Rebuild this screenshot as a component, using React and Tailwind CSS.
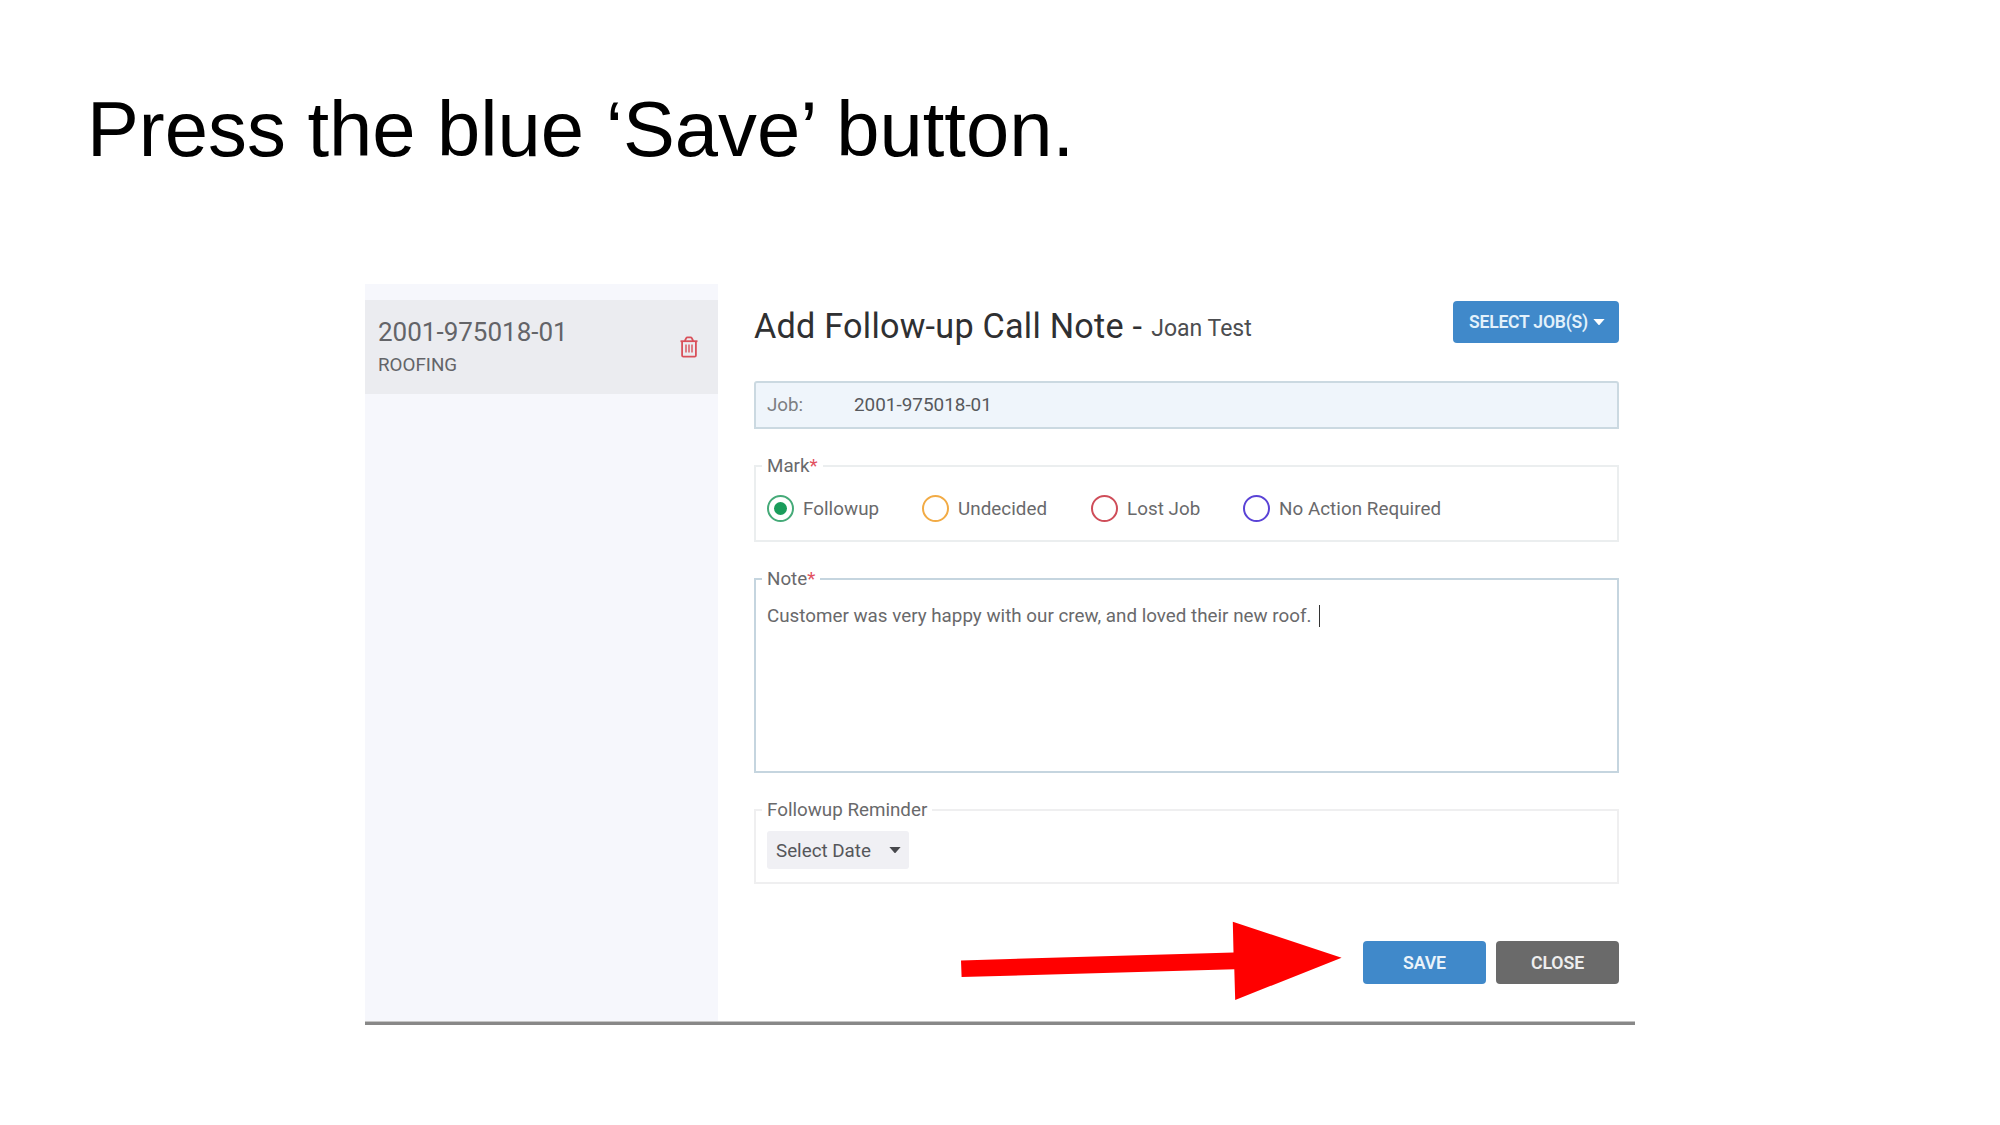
function TrashIcon() {
  return (
    <svg className="h-[22px] w-[18px]" viewBox="0 0 18 22" fill="none" stroke="#d9505a" strokeWidth="1.8">
      <path d="M0.5 5.2H17.5" />
      <path d="M4.8 5L6.2 2.2Q6.6 1.4 7.5 1.4H10.5Q11.4 1.4 11.8 2.2L13.2 5" />
      <path d="M2.1 5.2V19.4Q2.1 20.6 3.3 20.6H14.7Q15.9 20.6 15.9 19.4V5.2" />
      <path d="M6 8.6V16.6M9 8.6V16.6M12 8.6V16.6" strokeWidth="1.4" />
    </svg>
  );
}

function Caret({ className }) {
  return (
    <svg className={className} viewBox="0 0 12 6" fill="currentColor">
      <path d="M0.4 0H11.6L6.6 5.7Q6 6.2 5.4 5.7Z" />
    </svg>
  );
}

function Option({ width, ring, dot, label }) {
  return (
    <label className={`flex items-center ${width}`}>
      <span className={`mr-[9px] flex size-[27px] shrink-0 items-center justify-center rounded-full border-2 ${ring}`}>
        {dot && <span className="size-[13px] rounded-full bg-[#1a9c5b]" />}
      </span>
      <span className="whitespace-nowrap pt-[2px] tracking-[0.05px]">{label}</span>
    </label>
  );
}

function Legend({ children, required }) {
  return (
    <legend className="ml-[6px] whitespace-nowrap pl-[5px] pr-[5px] leading-[20px]">
      {children}
      {required && <span className="text-[#e2515f]">*</span>}
    </legend>
  );
}

function Sidebar() {
  return (
    <aside className="w-[353px] shrink-0 bg-[#f6f7fc] pt-4">
      <div className="flex h-[94px] items-start justify-between bg-[#ebecf0] pl-[13px] pr-[20px] text-[#636468]">
        <div className="pt-[16px]">
          <div className="text-[26px] leading-8">2001-975018-01</div>
          <div className="mt-[5px] text-[18.8px] leading-6">ROOFING</div>
        </div>
        <div className="pt-[36px]">
          <TrashIcon />
        </div>
      </div>
    </aside>
  );
}

function CallNoteForm() {
  return (
    <main className="flex w-[901px] flex-col pl-[36px] pt-[17px] text-[18.8px] text-[#69696b]">
      <div className="flex h-[42px] items-start justify-between">
        <h2 className="flex whitespace-nowrap pt-[5px] text-[34.2px] leading-10 tracking-[0.24px] text-[#2f3032]">
          Add Follow-up Call Note -
          <span className="ml-[9px] pt-[3px] text-[23px] tracking-normal text-[#4c4d50]">Joan Test</span>
        </h2>
        <button className="flex h-[42px] w-[166px] items-start rounded-[4px] bg-[#4089ca] pl-[16px] pt-[9px] text-[17.5px] font-semibold leading-6 tracking-[-0.2px] text-[#e3f1fb]">
          SELECT JOB(S)
          <Caret className="ml-[5px] mt-[9px] h-[6px] w-[12px] text-white" />
        </button>
      </div>

      <div className="mt-[38px] flex h-[48px] items-center rounded-t-[3px] border-2 border-[#cbd9e1] bg-[#eff5fb] pl-[11px]">
        <span className="w-[87px] text-[#7b7e82]">Job:</span>
        <span className="text-[18.9px] text-[#57595d]">2001-975018-01</span>
      </div>

      <fieldset className="mt-[27px] h-[86px] border-2 border-[#ebeeef]">
        <Legend required>Mark</Legend>
        <div className="flex pl-[11px] pt-[17px]">
          <Option width="w-[155px]" ring="border-[#45aa78]" dot label="Followup" />
          <Option width="w-[169px]" ring="border-[#f2ab45]" label="Undecided" />
          <Option width="w-[152px]" ring="border-[#cf4d59]" label="Lost Job" />
          <Option width="w-[200px]" ring="border-[#5a43d6]" label="No Action Required" />
        </div>
      </fieldset>

      <fieldset className="mt-[27px] h-[204px] border-2 border-[#c5d5df]">
        <Legend required>Note</Legend>
        <div className="flex items-center pl-[11px] pt-[15px] leading-6">
          <span className="whitespace-nowrap tracking-[0.01px]">Customer was very happy with our crew, and loved their new roof.</span>
          <span className="ml-[8px] h-[22px] w-px bg-[#333]" />
        </div>
      </fieldset>

      <fieldset className="mt-[27px] h-[84px] border-2 border-[#efeff0]">
        <Legend>Followup Reminder</Legend>
        <div className="pl-[11px] pt-[11px]">
          <button className="flex h-[38px] w-[142px] items-center rounded-[3px] bg-[#f0f0f4] pl-[9px] text-[#55565a]">
            <span className="pt-[2px]">Select Date</span>
            <Caret className="ml-[18px] h-[6px] w-[12px] text-[#47484c]" />
          </button>
        </div>
      </fieldset>

      <div className="mt-[57px] flex justify-end gap-[10px] text-[17.7px] font-semibold tracking-[-0.1px] text-[#eaf3fa]">
        <button className="h-[43px] w-[123px] rounded-[4px] bg-[#4089ca] pt-[1px]">SAVE</button>
        <button className="h-[43px] w-[123px] rounded-[4px] bg-[#6a6a6a] pt-[1px] text-[#eeeeee]">CLOSE</button>
      </div>
    </main>
  );
}

export default function App() {
  return (
    <div className="relative h-[1125px] w-[2000px] overflow-hidden bg-white font-['Roboto',sans-serif]">
      <header className="h-[284px] pl-[87px] pt-[89px]">
        <h1 className="whitespace-nowrap font-['Liberation_Sans',Arial,sans-serif] text-[77.78px] leading-[80px] text-black">
          Press the blue ‘Save’ button.
        </h1>
      </header>
      <section className="ml-[365px] w-[1270px]">
        <div className="flex h-[737px]">
          <Sidebar />
          <CallNoteForm />
        </div>
        <div className="h-px bg-[#c4c4c4]" />
        <div className="h-[3px] bg-[#888888]" />
      </section>
      <svg className="absolute left-[960px] top-[920px] h-[82px] w-[384px]" viewBox="960 920 384 82">
        <polygon fill="#ff0000" points="961,960.4 1233.5,952.6 1232.8,921.8 1341.6,957.7 1235.2,1000 1234.3,969.3 961.6,977" />
      </svg>
    </div>
  );
}
